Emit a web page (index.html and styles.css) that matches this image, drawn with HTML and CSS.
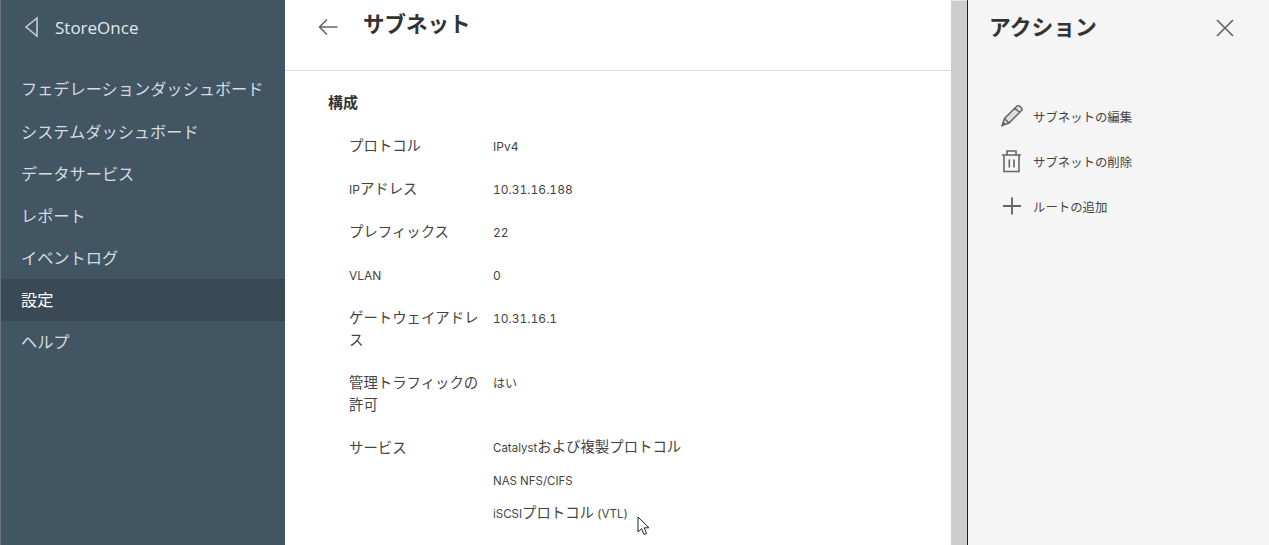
FILE: index.html
```html
<!DOCTYPE html>
<html lang="ja">
<head>
    <meta charset="UTF-8">
    <title>StoreOnce - サブネット</title>
    <link rel="stylesheet" href="styles.css">
</head>
<body>
    <nav class="sidebar">
        <div class="brand">
            <svg class="brand-icon" width="14" height="22" viewBox="0 0 14 22"><path d="M13 2 L2 11 L13 20 Z" fill="none" stroke="#c3ccd2" stroke-width="1.6"/></svg>
            <span>StoreOnce</span>
        </div>
        <ul class="menu">
            <li>フェデレーションダッシュボード</li>
            <li>システムダッシュボード</li>
            <li>データサービス</li>
            <li>レポート</li>
            <li>イベントログ</li>
            <li class="active">設定</li>
            <li>ヘルプ</li>
        </ul>
    </nav>

    <main class="content">
        <header class="page-head">
            <svg width="22" height="18" viewBox="0 0 22 18"><path d="M20.5 9 H2.5 M10 1.5 L2.5 9 L10 16.5" fill="none" stroke="#666" stroke-width="1.6"/></svg>
            <h1>サブネット</h1>
        </header>
        <section class="details">
            <h2>構成</h2>
            <div class="row"><div class="label">プロトコル</div><div class="value">IPv4</div></div>
            <div class="row"><div class="label"><span class="latin">IP</span>アドレス</div><div class="value">10.31.16.188</div></div>
            <div class="row"><div class="label">プレフィックス</div><div class="value">22</div></div>
            <div class="row"><div class="label"><span class="latin">VLAN</span></div><div class="value">0</div></div>
            <div class="row"><div class="label">ゲートウェイアドレス</div><div class="value">10.31.16.1</div></div>
            <div class="row"><div class="label">管理トラフィックの許可</div><div class="value">はい</div></div>
            <div class="row">
                <div class="label">サービス</div>
                <div class="value services">
                    <div>Catalyst<span class="jp">および複製プロトコル</span></div>
                    <div>NAS NFS/CIFS</div>
                    <div>iSCSI<span class="jp">プロトコル</span> (VTL)</div>
                </div>
            </div>
        </section>
    </main>

    <div class="scrollbar"></div>

    <aside class="actions">
        <div class="actions-head">
            <h2>アクション</h2>
            <svg width="20" height="20" viewBox="0 0 20 20"><path d="M2 2 L18 18 M18 2 L2 18" fill="none" stroke="#666" stroke-width="1.7"/></svg>
        </div>
        <ul class="action-list">
            <li>
                <svg width="24" height="24" viewBox="0 0 24 24"><path d="M1 20.5 L3.5 13.5 L16 1 Q17.5 0 19 1.5 L20.5 3 Q21.5 4.5 20.5 5.5 L8 18 Z M3.5 13.5 L8 18 M14 3 L18.5 7.5 M2 19.5 L4 19 L2.5 17.5 Z" fill="#666" fill-opacity="0.15" stroke="#666" stroke-width="1.5"/></svg>
                <span>サブネットの編集</span>
            </li>
            <li>
                <svg width="24" height="24" viewBox="0 0 24 24"><path d="M1 5 H20 M6 5 V1 H15 V5 M3 5 V21.5 H18 V5 M8.3 9.5 V17.5 M13 9.5 V17.5" fill="none" stroke="#666" stroke-width="1.6"/></svg>
                <span>サブネットの削除</span>
            </li>
            <li>
                <svg width="24" height="24" viewBox="0 0 24 24"><path d="M11 2.5 V19.5 M2 11 H20" fill="none" stroke="#666" stroke-width="1.9"/></svg>
                <span>ルートの追加</span>
            </li>
        </ul>
    </aside>

    <svg class="cursor" width="14" height="20" viewBox="0 0 14 20"><path d="M1 1 V16 L4.5 12.7 L7 18.5 L9.6 17.4 L7.1 11.8 L12 11.8 Z" fill="#fff" stroke="#222" stroke-width="1"/></svg>
</body>
</html>
```

FILE: styles.css
```css
body {
    margin: 0;
    height: 100vh;
    overflow: hidden;
    display: flex;
    background-color: #fff;
    color: #333;
    font-family: "Inter", "Noto Sans CJK JP", sans-serif;
}

ul {
    list-style: none;
    margin: 0;
    padding: 0;
}

.sidebar {
    width: 284px;
    flex-shrink: 0;
    border-left: 1px solid #66757f;
    background-color: #425563;
    color: #d5dce1;
}

.brand {
    display: flex;
    align-items: center;
    height: 54px;
    padding-left: 23px;
    font-family: "Open Sans", sans-serif;
    font-size: 17px;
    color: #e3e8eb;
}

.brand-icon {
    margin-right: 17px;
}

.menu {
    margin-top: 14px;
}

.menu li {
    height: 42px;
    line-height: 42px;
    padding-left: 20px;
    font-size: 16.2px;
    white-space: nowrap;
}

.menu li:first-child {
    height: 43px;
}

.menu li.active {
    background-color: #394956;
    color: #fff;
}

.content {
    width: 665px;
    flex-shrink: 0;
}

.page-head {
    display: flex;
    align-items: center;
    height: 70px;
    padding-left: 32px;
    border-bottom: 1px solid #ddd;
}

.page-head svg {
    margin-right: 24px;
    margin-bottom: 16px;
}

.page-head h1 {
    margin: 0 0 25px;
    font-size: 21.5px;
    font-weight: 700;
}

.details {
    padding: 21px 0 0 43px;
}

.details h2 {
    margin: 0 0 11px;
    height: 22px;
    line-height: 22px;
    font-size: 15px;
    font-weight: 700;
}

.row {
    display: flex;
    padding: 11px 0 10px 21px;
    line-height: 22px;
}

.label {
    width: 132px;
    margin: -1px 12px 1px 0;
    font-size: 14.4px;
    color: #444;
}

.latin {
    font-size: 12px;
    line-height: 1;
}

.value {
    font-size: 12px;
    font-variant-numeric: tabular-nums;
    color: #444;
}

.services {
    margin-top: -1px;
}

.services div {
    height: 33px;
    font-size: 11.5px;
}

.jp {
    font-size: 14.4px;
    line-height: 1;
}

.scrollbar {
    width: 16px;
    margin-left: 1px;
    flex-shrink: 0;
    border-top: 1px solid #e8e8e8;
    background-color: #cdcdcd;
}

.actions {
    flex: 1;
    border-left: 1px solid #222;
    background-color: #f5f5f5;
}

.actions-head {
    display: flex;
    align-items: center;
    justify-content: space-between;
    height: 56px;
    padding: 0 34px 0 21px;
}

.actions-head h2 {
    margin: 0 0 5px;
    font-size: 21.8px;
    font-weight: 700;
}

.action-list {
    margin-top: 38px;
    padding-left: 33px;
}

.action-list li {
    display: flex;
    align-items: center;
    height: 45px;
    font-size: 12.4px;
    color: #444;
}

.action-list svg {
    margin-right: 8px;
}

/* mouse pointer from the capture */
.cursor {
    position: absolute;
    left: 637px;
    top: 516px;
}
```
